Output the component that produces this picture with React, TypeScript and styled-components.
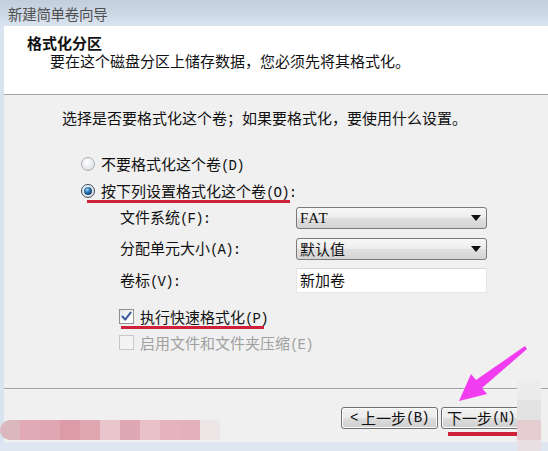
import React from 'react';
import styled, { createGlobalStyle } from 'styled-components';

const GlobalStyle = createGlobalStyle`
  html, body { margin: 0; padding: 0; }
  body { width: 548px; height: 451px; overflow: hidden; background: #f0f0f0; }
  * { box-sizing: border-box; }
`;

const FONT = `"Noto Sans CJK SC", "Liberation Sans", sans-serif`;
const MONO = `"Liberation Mono", "Noto Sans CJK SC", monospace`;

const Window = styled.div`
  position: relative;
  width: 548px;
  height: 451px;
  display: flex;
  flex-direction: column;
  overflow: hidden;
  font-family: ${FONT};
  font-size: 15px;
  color: #111;
  background: #d9e4f1;
`;

const TitleBar = styled.div`
  height: 26px;
  flex: none;
  display: flex;
  align-items: center;
  padding-left: 8px;
  background: linear-gradient(#c2cedc, #cfdae7 60%, #dae4ef);
  color: #505050;
  font-size: 14.5px;
  letter-spacing: -0.3px;
`;

const Middle = styled.div`
  flex: 1;
  display: flex;
  min-height: 0;
`;

const LeftEdge = styled.div`
  width: 4px;
  flex: none;
  background: #d8e3f0;
`;

const Content = styled.div`
  flex: 1;
  display: flex;
  flex-direction: column;
  background: #f0f0f0;
`;

const Header = styled.div`
  height: 69px;
  flex: none;
  background: #fff;
  border-bottom: 1px solid #a0a0a0;
  padding-top: 8px;
  line-height: 18px;
`;

const Heading = styled.div`
  margin-left: 23px;
  font-weight: 700;
  font-size: 15px;
`;

const SubTitle = styled.div`
  margin-left: 46px;
`;

const Body = styled.div`
  flex: 1;
  display: flex;
  flex-direction: column;
  padding-top: 13px;
`;

const Intro = styled.div`
  margin-left: 58px;
  line-height: 20px;
  height: 20px;
`;

const Lat = styled.span`
  font-family: ${MONO};
  font-size: 14px;
  letter-spacing: -0.8px;
`;

const RadioGroup = styled.div`
  margin-top: 22px;
  margin-left: 77px;
  display: flex;
  flex-direction: column;
`;

const OptionRow = styled.div`
  height: 27px;
  display: flex;
  align-items: center;
  gap: 6px;
`;

const Radio = styled.span<{ $checked?: boolean }>`
  width: 14px;
  height: 14px;
  flex: none;
  border-radius: 50%;
  border: 1px solid ${(p) => (p.$checked ? '#3b4a5a' : '#a9adb3')};
  background: radial-gradient(circle at 40% 35%, #ffffff, #e2e4e7 70%, #cfd2d6);
  display: inline-flex;
  align-items: center;
  justify-content: center;
  &::after {
    content: '';
    width: 8px;
    height: 8px;
    border-radius: 50%;
    background: radial-gradient(circle at 40% 35%, #a8d8ff 0%, #2d7ab8 35%, #0d3c66 75%, #082a4a);
    display: ${(p) => (p.$checked ? 'block' : 'none')};
  }
`;

const Fields = styled.div`
  margin-top: 3px;
  margin-left: 116px;
  display: grid;
  grid-template-columns: 176px 191px;
  grid-template-rows: 22px 22px 25px;
  row-gap: 8.5px;
  align-items: center;
`;

const Label = styled.div`
  line-height: 20px;
`;

const Select = styled.div`
  height: 22px;
  border: 1px solid #7a7a7a;
  border-radius: 3px;
  background: linear-gradient(#f7f7f7, #ececec 50%, #e0e0e0 51%, #d4d4d4);
  display: flex;
  align-items: center;
  justify-content: space-between;
  padding: 0 5px 0 3px;
`;

const SelectText = styled.span<{ $mono?: boolean }>`
  font-family: ${(p) => (p.$mono ? `"Liberation Serif", serif` : FONT)};
  font-size: 15px;
  letter-spacing: ${(p) => (p.$mono ? '1px' : '0')};
  line-height: 20px;
`;

const Arrow = styled.span`
  width: 0;
  height: 0;
  border-left: 5px solid transparent;
  border-right: 5px solid transparent;
  border-top: 6px solid #111;
`;

const TextInput = styled.div`
  height: 25px;
  background: #fff;
  border: 1px solid #e4e4e4;
  border-top-color: #d8d8d8;
  padding-left: 3px;
  line-height: 22px;
`;

const CheckGroup = styled.div`
  margin-top: 10px;
  margin-left: 115px;
  display: flex;
  flex-direction: column;
`;

const CheckRow = styled.div<{ $disabled?: boolean }>`
  height: 26px;
  display: flex;
  align-items: center;
  gap: 6px;
  color: ${(p) => (p.$disabled ? '#a0a0a0' : '#111')};
`;

const Box = styled.span<{ $disabled?: boolean }>`
  width: 15px;
  height: 15px;
  flex: none;
  border: 1px solid ${(p) => (p.$disabled ? '#c8c8c8' : '#8e8f8f')};
  background: ${(p) =>
    p.$disabled ? '#f4f4f4' : 'linear-gradient(135deg, #dfe3e8, #ffffff 70%)'};
  display: inline-flex;
  align-items: center;
  justify-content: center;
`;

const Separator = styled.div`
  height: 2px;
  flex: none;
  border-top: 1px solid #a0a0a0;
  border-bottom: 1px solid #f8f8f8;
`;

const Footer = styled.div`
  height: 52px;
  flex: none;
  display: flex;
  gap: 3px;
  padding: 17px 0 0 337px;
`;

const Button = styled.div<{ $w: number }>`
  width: ${(p) => p.$w}px;
  height: 22px;
  border: 1px solid #707070;
  border-radius: 3px;
  background: linear-gradient(#f2f2f2, #ebebeb 50%, #dddddd 51%, #cfcfcf);
  box-shadow: inset 0 0 0 1px #fcfcfc;
  display: flex;
  align-items: center;
  justify-content: center;
  line-height: 20px;
`;

const BottomStrip = styled.div`
  height: 9px;
  flex: none;
  background: #dde6f1;
`;

const Mark = styled.div<{ $x: number; $y: number; $w: number; $h: number }>`
  position: absolute;
  left: ${(p) => p.$x}px;
  top: ${(p) => p.$y}px;
  width: ${(p) => p.$w}px;
  height: ${(p) => p.$h}px;
  background: #d0213b;
`;

const BlurStrip = styled.div`
  position: absolute;
  left: 0;
  top: 420px;
  height: 20px;
  display: flex;
`;

const BlurCell = styled.div<{ $c: string; $round?: boolean }>`
  width: 20px;
  height: 20px;
  background: ${(p) => p.$c};
  border-radius: ${(p) => (p.$round ? '10px 0 0 10px' : '0')};
`;

const Watermark = styled.div`
  position: absolute;
  left: 517px;
  top: 380px;
  width: 24px;
  display: flex;
  flex-direction: column;
  border-radius: 4px 4px 0 0;
  overflow: hidden;
`;

const WaterCell = styled.div<{ $c: string; $h: number }>`
  height: ${(p) => p.$h}px;
  background: ${(p) => p.$c};
`;

const ArrowSvg = styled.svg`
  position: absolute;
  left: 0;
  top: 0;
  pointer-events: none;
`;

const blurColors = [
  '#dbb7be',
  '#e1aab4',
  '#e0a6b1',
  '#dc9ba6',
  '#e0a7b1',
  '#e9c6cb',
  '#dfa7b1',
  '#e9c1c6',
  '#e5b3bb',
  '#e3b1b9',
  '#ede6e7',
];

export default function App() {
  return (
    <>
      <GlobalStyle />
      <Window>
        <TitleBar>新建简单卷向导</TitleBar>
        <Middle>
          <LeftEdge />
          <Content>
            <Header>
              <Heading>格式化分区</Heading>
              <SubTitle>要在这个磁盘分区上储存数据，您必须先将其格式化。</SubTitle>
            </Header>
            <Body>
              <Intro>选择是否要格式化这个卷；如果要格式化，要使用什么设置。</Intro>
              <RadioGroup>
                <OptionRow>
                  <Radio />
                  <span>
                    不要格式化这个卷<Lat>(D)</Lat>
                  </span>
                </OptionRow>
                <OptionRow>
                  <Radio $checked />
                  <span>
                    按下列设置格式化这个卷<Lat>(O):</Lat>
                  </span>
                </OptionRow>
              </RadioGroup>
              <Fields>
                <Label>
                  文件系统<Lat>(F):</Lat>
                </Label>
                <Select>
                  <SelectText $mono>FAT</SelectText>
                  <Arrow />
                </Select>
                <Label>
                  分配单元大小<Lat>(A):</Lat>
                </Label>
                <Select>
                  <SelectText>默认值</SelectText>
                  <Arrow />
                </Select>
                <Label>
                  卷标<Lat>(V):</Lat>
                </Label>
                <TextInput>新加卷</TextInput>
              </Fields>
              <CheckGroup>
                <CheckRow>
                  <Box>
                    <svg width="11" height="11" viewBox="0 0 11 11">
                      <path
                        d="M1.5 5.5 L4.2 8.6 L9.6 1.6"
                        fill="none"
                        stroke="#3a5a9a"
                        strokeWidth="2"
                        strokeLinecap="round"
                        strokeLinejoin="round"
                      />
                    </svg>
                  </Box>
                  <span>
                    执行快速格式化<Lat>(P)</Lat>
                  </span>
                </CheckRow>
                <CheckRow $disabled>
                  <Box $disabled />
                  <span>
                    启用文件和文件夹压缩<Lat>(E)</Lat>
                  </span>
                </CheckRow>
              </CheckGroup>
            </Body>
            <Separator />
            <Footer>
              <Button $w={97}>
                <Lat>&lt;</Lat>&nbsp;上一步<Lat>(B)</Lat>
              </Button>
              <Button $w={80}>
                下一步<Lat>(N)</Lat>
              </Button>
            </Footer>
          </Content>
        </Middle>
        <BottomStrip />

        <Mark $x={87} $y={200} $w={203} $h={3} />
        <Mark $x={121} $y={326} $w={143} $h={3} />
        <Mark $x={448} $y={432} $w={70} $h={4} />

        <BlurStrip>
          {blurColors.map((c, i) => (
            <BlurCell key={i} $c={c} $round={i === 0} />
          ))}
        </BlurStrip>

        <Watermark>
          <WaterCell $c="#ececec" $h={20} />
          <WaterCell $c="#e3e3e3" $h={20} />
          <WaterCell $c="#e4ccd0" $h={20} />
          <WaterCell $c="#e7dfe1" $h={11} />
        </Watermark>

        <ArrowSvg width="548" height="451" viewBox="0 0 548 451">
          <polygon
            points="459,401 487,394 482,388 527,349 525,346 476,380 471,374"
            fill="#f23cf0"
          />
        </ArrowSvg>
      </Window>
    </>
  );
}
